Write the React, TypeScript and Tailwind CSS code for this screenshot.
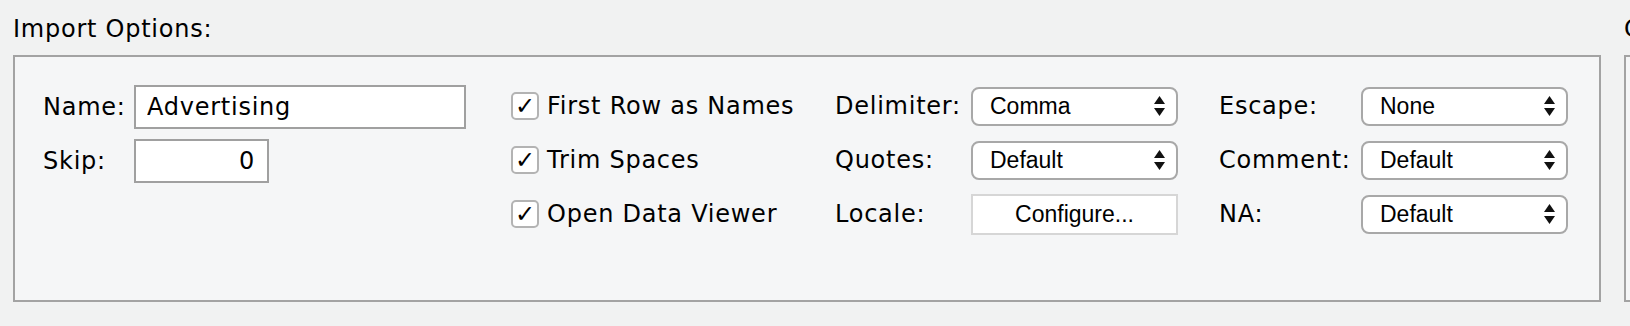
import React from "react";

const label = "font-['DejaVu_Sans',sans-serif] text-[24px] leading-[28px] tracking-[0.75px] text-black whitespace-nowrap";
const control = "font-['Liberation_Sans',Arial,sans-serif] text-[23px] text-black";

const Arrows = () => (
  <svg width="11" height="20" viewBox="0 0 11 20" className="ml-auto mr-[11px]">
    <polygon points="0,8 5.5,0 11,8" fill="#111" />
    <polygon points="0,12 11,12 5.5,20" fill="#111" />
  </svg>
);

const Select = ({ value }: { value: string }) => (
  <div
    className={`flex h-[39px] w-[207px] items-center rounded-[8px] border-2 border-[#a8a8a8] bg-white pl-[17px] ${control}`}
  >
    <span>{value}</span>
    <Arrows />
  </div>
);

const Check = ({ text }: { text: string }) => (
  <div className="flex h-[54px] items-center gap-[8px]">
    <span className="flex h-[28px] w-[28px] items-center justify-center rounded-[5px] border-2 border-[#b3b3b3] bg-white font-['DejaVu_Sans',sans-serif] text-[24px] font-bold leading-none text-black">
      ✓
    </span>
    <span className={label}>{text}</span>
  </div>
);

const Row = ({ name, width, children }: { name: string; width: string; children: React.ReactNode }) => (
  <div className="flex h-[54px] items-center">
    <span className={`${label} ${width}`}>{name}</span>
    {children}
  </div>
);

const App = () => {
  return (
    <div className="flex h-[326px] w-[1630px] gap-[23px] overflow-hidden bg-[#f1f2f2] pl-[13px]">
      <div className="w-[1588px] shrink-0">
        <h2 className={`${label} pt-[15px] pb-[12px] font-normal`}>Import Options:</h2>

        <div className="flex h-[247px] items-start border-2 border-[#a3a3a3] bg-[#f5f6f7] pt-[22px] pl-[28px]">
          <div className="grid grid-cols-[91px_auto] items-center gap-y-[10px] pt-[6px]">
            <span className={label}>Name:</span>
            <input
              readOnly
              defaultValue="Advertising"
              className={`h-[44px] w-[332px] border-2 border-[#a0a0a0] bg-white pl-[11px] outline-none ${label}`}
            />
            <span className={label}>Skip:</span>
            <input
              readOnly
              defaultValue="0"
              className={`h-[44px] w-[135px] border-2 border-[#a0a0a0] bg-white pr-[12px] text-right outline-none ${label}`}
            />
          </div>

          <div className="ml-[45px] w-[324px]">
            <Check text="First Row as Names" />
            <Check text="Trim Spaces" />
            <Check text="Open Data Viewer" />
          </div>

          <div>
            <Row name="Delimiter:" width="w-[136px]">
              <Select value="Comma" />
            </Row>
            <Row name="Quotes:" width="w-[136px]">
              <Select value="Default" />
            </Row>
            <Row name="Locale:" width="w-[136px]">
              <button
                className={`h-[41px] w-[207px] border-2 border-[#d6d6d6] bg-white ${control}`}
              >
                Configure...
              </button>
            </Row>
          </div>

          <div className="ml-[41px]">
            <Row name="Escape:" width="w-[142px]">
              <Select value="None" />
            </Row>
            <Row name="Comment:" width="w-[142px]">
              <Select value="Default" />
            </Row>
            <Row name="NA:" width="w-[142px]">
              <Select value="Default" />
            </Row>
          </div>
        </div>
      </div>

      <div className="shrink-0">
        <h2 className={`${label} pt-[15px] pb-[12px] font-normal`}>Code Preview:</h2>
        <div className="h-[247px] w-[600px] border-2 border-[#a3a3a3] bg-[#f5f6f7]" />
      </div>
    </div>
  );
};

export default App;
